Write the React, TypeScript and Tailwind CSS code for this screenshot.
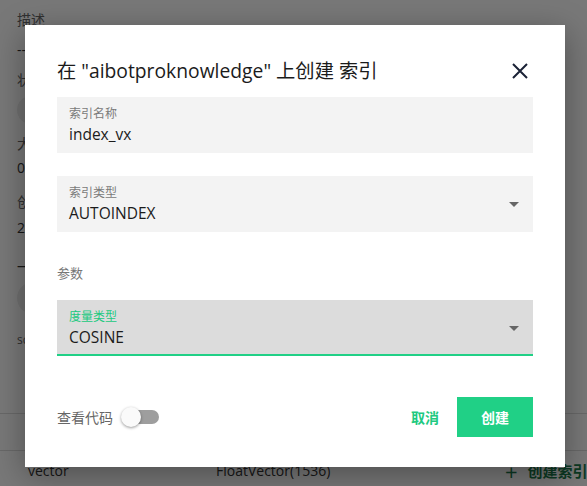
import React from "react";

const font = { fontFamily: '"Open Sans", "Noto Sans CJK SC", sans-serif' };

function Field({
  label,
  value,
  select,
  active,
}: {
  label: string;
  value: string;
  select?: boolean;
  active?: boolean;
}) {
  return (
    <div
      className={`relative h-[56px] w-full px-3 pt-[8px] ${
        active ? "bg-[#dcdcdc] border-b-2 border-[#20d086]" : "bg-[#f3f3f3]"
      }`}
    >
      <div
        className={`text-[12px] leading-[18px] ${
          active ? "text-[#20c980]" : "text-[#7a7a7a]"
        }`}
      >
        {label}
      </div>
      <div className="text-[15.5px] leading-[22px] text-[#1b1b1b]">{value}</div>
      {select && (
        <div className="absolute right-[14px] top-[26px] h-0 w-0 border-x-[5px] border-t-[5px] border-x-transparent border-t-[#666]" />
      )}
    </div>
  );
}

export default function App() {
  return (
    <div
      className="relative h-[486px] w-[587px] overflow-hidden bg-white text-[#333]"
      style={font}
    >
      {/* background page */}
      <div className="flex flex-col pl-[17px] pt-[10px] text-[14px]">
        <div className="leading-[20px] text-[#666]">描述</div>
        <div className="mt-[10px] leading-[20px]">--</div>
        <div className="mt-[10px] leading-[20px] text-[#666]">状态</div>
        <div className="mt-[6px] h-[28px] w-[120px] rounded-full bg-[#eee]" />
        <div className="mt-[10px] leading-[20px] text-[#666]">大小</div>
        <div className="mt-[4px] leading-[20px]">0</div>
        <div className="mt-[14px] leading-[20px] text-[#666]">创建时间</div>
        <div className="mt-[6px] leading-[20px]">2024</div>
        <div className="mt-[18px] leading-[20px]">—</div>
        <div className="mt-[6px] h-[32px] w-[90px] rounded-full bg-[#eee]" />
        <div className="mt-[18px] text-[12px] leading-[16px] text-[#666]">schema</div>
      </div>
      <div className="absolute left-0 right-0 top-[413px] border-t border-[#ddd]" />
      <div className="absolute left-0 right-0 top-[450px] border-t border-[#ddd]" />
      <div className="absolute left-[28px] top-[461px] flex w-[600px] items-center text-[14px] leading-[20px]">
        <span className="w-[188px]">vector</span>
        <span className="w-[237px]">FloatVector(1536)</span>
        <span className="ml-[52px] flex items-center gap-[10px] font-bold text-[#1a7a4c]">
          <span className="text-[22px] font-normal">+</span>
          <span className="text-[15px]">创建索引</span>
        </span>
      </div>

      {/* overlay */}
      <div className="absolute inset-0 bg-black/[0.53]" />

      {/* modal */}
      <div className="absolute left-[25px] top-[25px] flex h-[442px] w-[540px] flex-col bg-white px-[32px] pt-[32px] shadow-[0_8px_30px_rgba(0,0,0,0.35)]">
        <div className="flex h-[28px] items-center justify-between">
          <div className="text-[19.3px] leading-[28px] text-[#1b1b1b]">
            在 "aibotproknowledge" 上创建 索引
          </div>
          <svg width="18" height="18" viewBox="0 0 18 18" className="mr-[4px]">
            <path
              d="M2 2 L16 16 M16 2 L2 16"
              stroke="#1a2236"
              strokeWidth="2"
              fill="none"
            />
          </svg>
        </div>
        <div className="mt-[12px]">
          <Field label="索引名称" value="index_vx" />
        </div>
        <div className="mt-[23px]">
          <Field label="索引类型" value="AUTOINDEX" select />
        </div>
        <div className="mt-[31px] text-[13px] leading-[20px] text-[#777]">参数</div>
        <div className="mt-[17px]">
          <Field label="度量类型" value="COSINE" select active />
        </div>
        <div className="mt-[41px] flex h-[40px] items-center">
          <span className="text-[14px] text-[#666]">查看代码</span>
          <div className="relative ml-[10px] h-[14px] w-[36px] rounded-full bg-[#9e9e9e]">
            <div className="absolute left-[-2px] top-[-3px] h-[20px] w-[20px] rounded-full bg-[#fafafa] shadow-[0_1px_3px_rgba(0,0,0,0.4)]" />
          </div>
          <div className="flex-1" />
          <span className="mr-[18px] text-[14px] font-bold text-[#20c980]">取消</span>
          <div className="flex h-[40px] w-[76px] items-center justify-center bg-[#20d086] text-[14px] font-bold text-white">
            创建
          </div>
        </div>
      </div>
    </div>
  );
}
